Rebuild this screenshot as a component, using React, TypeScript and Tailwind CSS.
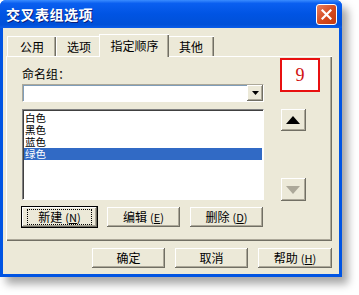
import React from "react";

const font = { fontFamily: '"Noto Sans CJK SC", "Noto Sans", sans-serif' };
const tight = { fontFamily: '"Liberation Sans", "Noto Sans CJK SC", sans-serif' };

// raised 3D button edge, XP classic-ish
const bevel =
  "bg-[#ece9d8] shadow-[inset_-1px_-1px_0_#716f64,inset_1px_1px_0_#ffffff,inset_-2px_-2px_0_#aca899]";

function Btn({ label, hot, def, className = "" }: { label: string; hot?: string; def?: boolean; className?: string }) {
  return (
    <div
      className={`h-[20px] flex items-center justify-center text-[12px] leading-none text-black ${bevel} ${
        def ? "outline outline-1 outline-black" : ""
      } ${className}`}
    >
      <span className={def ? "border border-dotted border-black px-[10px] py-[1px]" : ""}>
        {label}
        {hot && <span className="ml-[3px] text-[11px]">(<span className="underline">{hot}</span>)</span>}
      </span>
    </div>
  );
}

function Tab({ label, active, w }: { label: string; active?: boolean; w: string }) {
  return (
    <div
      className={`${w} flex items-center justify-center text-[12px] text-black border-t border-l border-white shadow-[inset_-1px_0_0_#716f64,inset_-2px_0_0_#aca899] ${
        active ? "h-[23px] bg-[#ece9d8] relative z-10 -mb-[1px] -mx-[2px]" : "h-[20px] bg-[#ece9d8]"
      }`}
    >
      {label}
    </div>
  );
}

export default function App() {
  return (
    <div className="w-[359px] h-[295px] bg-white" style={font}>
      <div className="w-[342px] h-[277px] flex flex-col rounded-t-[6px] bg-[#0054e3] shadow-[6px_7px_9px_rgba(0,0,0,0.35)]">
        {/* Title bar */}
        <div className="h-[28px] flex items-center justify-between pl-[6px] pr-[5px] rounded-t-[6px] bg-[linear-gradient(#3a8cff,#0a5ff0_12%,#0054e3_50%,#0050d8_88%,#0b5dea)]">
          <span className="text-white font-bold text-[14px] tracking-[0.5px] [text-shadow:1px_1px_0_#0a1e7a]">
            交叉表组选项
          </span>
          <div className="w-[21px] h-[21px] rounded-[3px] border border-white bg-[linear-gradient(135deg,#e97f5f,#d4491e_55%,#c33a10)] flex items-center justify-center">
            <svg width="11" height="11" viewBox="0 0 11 11">
              <path d="M1.5 1.5 L9.5 9.5 M9.5 1.5 L1.5 9.5" stroke="white" strokeWidth="2.2" strokeLinecap="square" />
            </svg>
          </div>
        </div>

        {/* Client area */}
        <div className="flex-1 mx-[3px] mb-[3px] bg-[#ece9d8] flex flex-col pl-[3px] pr-[7px] pt-[6px]">
          {/* tabs */}
          <div className="flex items-end h-[22px] pl-[1px]">
            <Tab label="公用" w="w-[49px]" />
            <Tab label="选项" w="w-[45px]" />
            <Tab label="指定顺序" w="w-[70px]" active />
            <Tab label="其他" w="w-[47px]" />
          </div>

          {/* panel */}
          <div className="h-[185px] border-t border-l border-white shadow-[inset_-1px_-1px_0_#716f64,inset_-2px_-2px_0_#aca899] flex pl-[15px] pr-[10px]">
            <div className="w-[242px] flex flex-col">
              <div className="mt-[10px] h-[14px] text-[12px] leading-[14px] text-black">命名组：</div>
              <div className="mt-[3px] h-[18px] bg-white flex justify-end shadow-[inset_1px_1px_0_#7f9db9,inset_-1px_-1px_0_#ffffff] border border-[#aca899] border-r-white border-b-white">
                <div className={`w-[16px] h-full flex items-center justify-center ${bevel}`}>
                  <svg width="7" height="4" viewBox="0 0 7 4">
                    <path d="M0 0 H7 L3.5 4 Z" fill="black" />
                  </svg>
                </div>
              </div>
              <div className="mt-[7px] h-[91px] bg-white border border-[#808080] border-r-white border-b-white shadow-[inset_1px_1px_0_#404040] pt-[2px] pl-[1px] pr-[1px] flex flex-col">
                {["白色", "黑色", "蓝色", "绿色"].map((c, i) => (
                  <div
                    key={c}
                    className={`h-[12px] leading-[12px] text-[10.5px] pl-[1px] ${
                      i === 3 ? "bg-[#316ac5] text-white" : "text-black"
                    }`}
                    style={tight}
                  >
                    {c}
                  </div>
                ))}
              </div>
              <div className="mt-[7px] flex gap-[10px]">
                <Btn label="新建" hot="N" def className="w-[75px]" />
                <Btn label="编辑" hot="E" className="w-[73px]" />
                <Btn label="删除" hot="D" className="w-[73px]" />
              </div>
            </div>
            <div className="flex-1 flex flex-col items-center">
              <div className="mt-[1px] ml-[14px] w-[40px] h-[34px] bg-white border-2 border-[#e81010] flex items-center justify-center text-[#d01010] text-[18px] leading-none" style={{ fontFamily: '"Liberation Serif", serif' }}>
                9
              </div>
              <div className={`mt-[17px] w-[25px] h-[22px] flex items-center justify-center ${bevel}`}>
                <svg width="14" height="8" viewBox="0 0 14 8">
                  <path d="M0 8 L7 0 L14 8 Z" fill="black" />
                </svg>
              </div>
              <div className={`mt-[47px] w-[25px] h-[23px] flex items-center justify-center ${bevel}`}>
                <svg width="14" height="8" viewBox="0 0 14 8">
                  <path d="M0 0 L14 0 L7 8 Z" fill="#aca899" />
                </svg>
              </div>
            </div>
          </div>

          {/* bottom buttons */}
          <div className="mt-[7px] flex justify-end gap-[10px]">
            <Btn label="确定" className="w-[73px]" />
            <Btn label="取消" className="w-[73px]" />
            <Btn label="帮助" hot="H" className="w-[74px]" />
          </div>
        </div>
      </div>
    </div>
  );
}
